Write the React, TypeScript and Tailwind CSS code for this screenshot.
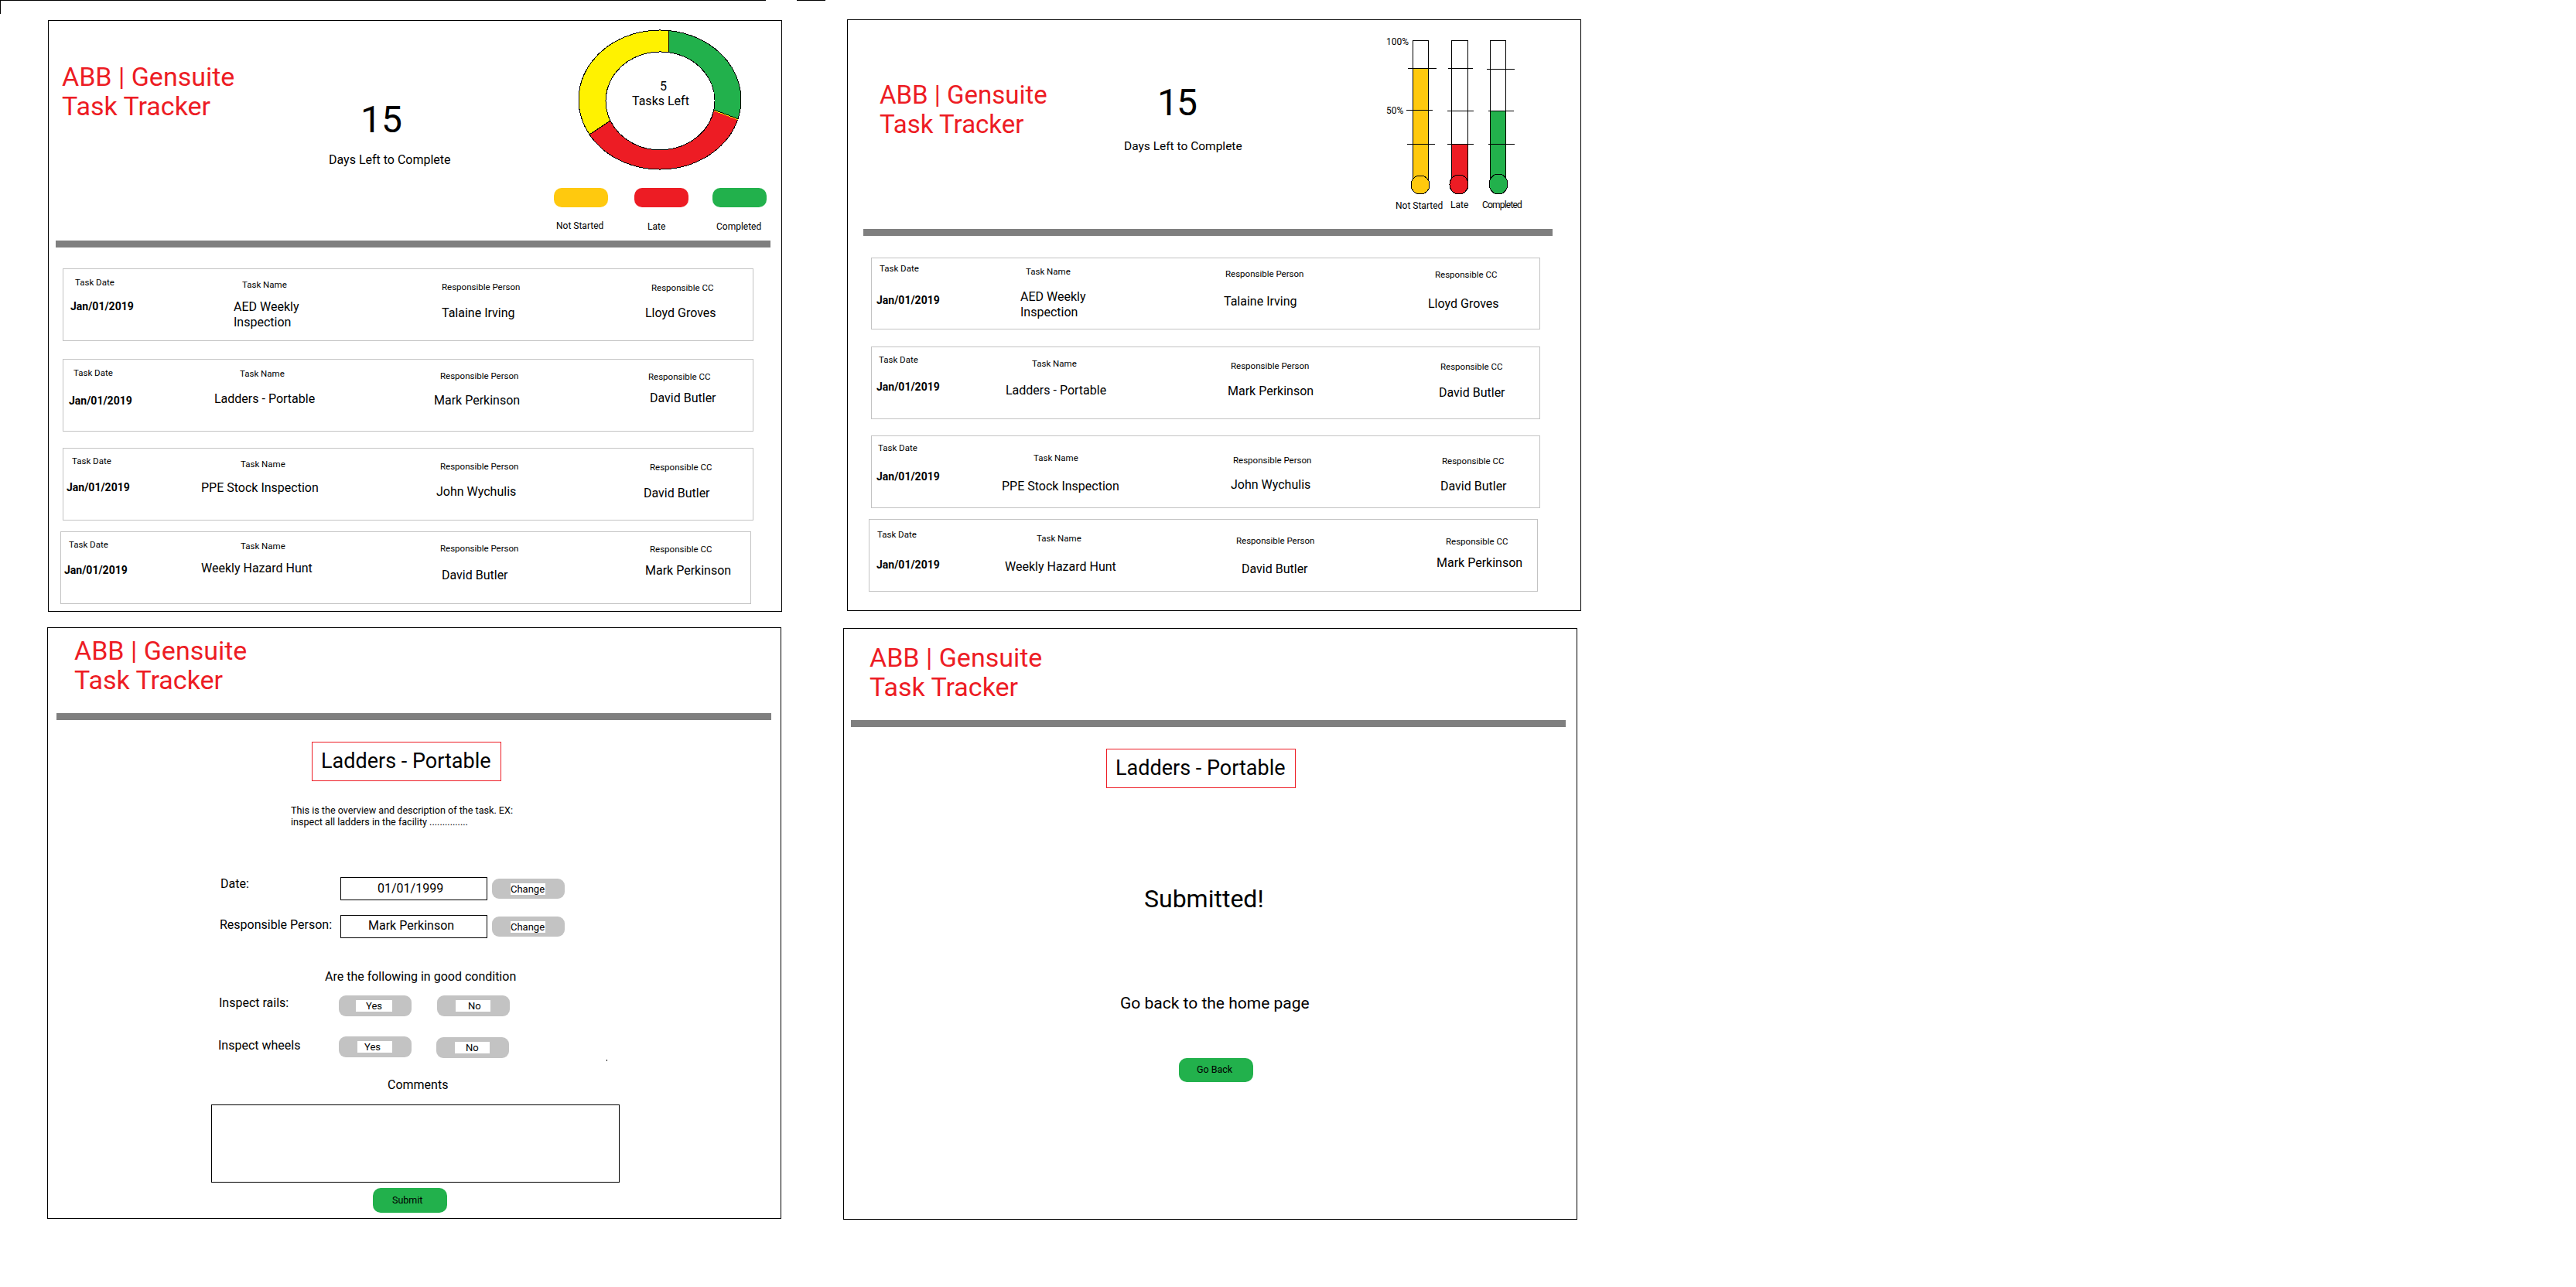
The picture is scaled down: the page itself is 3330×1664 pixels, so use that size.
import React from "react";

type Cell = { label: string; lc: string; value: React.ReactNode; vc: string };
type RowData = { cls: string; cells: Cell[] };

const L = ["Task Date", "Task Name", "Responsible Person", "Responsible CC"];

function c(i: number, lc: string, value: React.ReactNode, vc: string): Cell {
  return { label: L[i], lc, value, vc };
}

const aed = (
  <>
    AED Weekly
    <br />
    Inspection
  </>
);

const rows1: RowData[] = [
  {
    cls: "mt-[27px] ml-[18px] h-[94px]",
    cells: [
      c(0, "ml-[15px] mt-[9px]", "Jan/01/2019", "ml-[9px] mt-[13px]"),
      c(1, "ml-[71px] mt-[12px]", aed, "ml-[60px] mt-[11px]"),
      c(2, "ml-[49px] mt-[15px]", "Talaine Irving", "ml-[49px] mt-[16px]"),
      c(3, "ml-[60px] mt-[16px]", "Lloyd Groves", "ml-[52px] mt-[15px]"),
    ],
  },
  {
    cls: "mt-[23px] ml-[18px] h-[94px]",
    cells: [
      c(0, "ml-[13px] mt-[9px]", "Jan/01/2019", "ml-[7px] mt-[18px]"),
      c(1, "ml-[68px] mt-[10px]", "Ladders - Portable", "ml-[35px] mt-[15px]"),
      c(2, "ml-[47px] mt-[13px]", "Mark Perkinson", "ml-[39px] mt-[14px]"),
      c(3, "ml-[56px] mt-[14px]", "David Butler", "ml-[58px] mt-[10px]"),
    ],
  },
  {
    cls: "mt-[21px] ml-[18px] h-[94px]",
    cells: [
      c(0, "ml-[11px] mt-[8px]", "Jan/01/2019", "ml-[4px] mt-[16px]"),
      c(1, "ml-[69px] mt-[12px]", "PPE Stock Inspection", "ml-[18px] mt-[13px]"),
      c(2, "ml-[47px] mt-[15px]", "John Wychulis", "ml-[42px] mt-[15px]"),
      c(3, "ml-[58px] mt-[16px]", "David Butler", "ml-[50px] mt-[16px]"),
    ],
  },
  {
    cls: "mt-[14px] ml-[15px] h-[94px]",
    cells: [
      c(0, "ml-[10px] mt-[8px]", "Jan/01/2019", "ml-[4px] mt-[15px]"),
      c(1, "ml-[72px] mt-[10px]", "Weekly Hazard Hunt", "ml-[21px] mt-[11px]"),
      c(2, "ml-[50px] mt-[13px]", "David Butler", "ml-[52px] mt-[17px]"),
      c(3, "ml-[61px] mt-[14px]", "Mark Perkinson", "ml-[55px] mt-[10px]"),
    ],
  },
];

const rows2: RowData[] = [
  {
    cls: "mt-[28px] ml-[30px] h-[93px]",
    cells: [
      c(0, "ml-[10px] mt-[5px]", "Jan/01/2019", "ml-[6px] mt-[23px]"),
      c(1, "ml-[39px] mt-[9px]", aed, "ml-[32px] mt-[15px]"),
      c(2, "ml-[17px] mt-[12px]", "Talaine Irving", "ml-[15px] mt-[18px]"),
      c(3, "ml-[28px] mt-[13px]", "Lloyd Groves", "ml-[19px] mt-[20px]"),
    ],
  },
  {
    cls: "mt-[22px] ml-[30px] h-[94px]",
    cells: [
      c(0, "ml-[9px] mt-[8px]", "Jan/01/2019", "ml-[6px] mt-[17px]"),
      c(1, "ml-[47px] mt-[13px]", "Ladders - Portable", "ml-[13px] mt-[17px]"),
      c(2, "ml-[24px] mt-[16px]", "Mark Perkinson", "ml-[20px] mt-[15px]"),
      c(3, "ml-[35px] mt-[17px]", "David Butler", "ml-[33px] mt-[16px]"),
    ],
  },
  {
    cls: "mt-[21px] ml-[30px] h-[94px]",
    cells: [
      c(0, "ml-[8px] mt-[7px]", "Jan/01/2019", "ml-[6px] mt-[19px]"),
      c(1, "ml-[49px] mt-[20px]", "PPE Stock Inspection", "ml-[8px] mt-[19px]"),
      c(2, "ml-[27px] mt-[23px]", "John Wychulis", "ml-[24px] mt-[14px]"),
      c(3, "ml-[37px] mt-[24px]", "David Butler", "ml-[35px] mt-[15px]"),
    ],
  },
  {
    cls: "mt-[14px] ml-[27px] h-[94px]",
    cells: [
      c(0, "ml-[10px] mt-[11px]", "Jan/01/2019", "ml-[9px] mt-[21px]"),
      c(1, "ml-[56px] mt-[16px]", "Weekly Hazard Hunt", "ml-[15px] mt-[19px]"),
      c(2, "ml-[34px] mt-[19px]", "David Butler", "ml-[41px] mt-[19px]"),
      c(3, "ml-[45px] mt-[20px]", "Mark Perkinson", "ml-[33px] mt-[10px]"),
    ],
  },
];

const colW = ["w-[160px]", "w-[280px]", "w-[260px]", "flex-1"];

function TaskRow({ row, width }: { row: RowData; width: string }) {
  return (
    <div className={`flex shrink-0 border border-[#c3c3c3] ${width} ${row.cls}`}>
      {row.cells.map((cell, i) => (
        <div key={i} className={colW[i]}>
          <div className={`text-[11.5px] leading-[16px] whitespace-nowrap ${cell.lc}`}>{cell.label}</div>
          <div
            className={`whitespace-nowrap ${
              i === 0 ? "text-[14px] font-bold leading-[20px]" : "text-[16px] leading-[20px]"
            } ${cell.vc}`}
          >
            {cell.value}
          </div>
        </div>
      ))}
    </div>
  );
}

function Title({ cls }: { cls: string }) {
  return (
    <div className={`leading-[38px] text-[#ed1c24] whitespace-nowrap ${cls}`}>
      ABB | Gensuite
      <br />
      Task Tracker
    </div>
  );
}

function Donut() {
  return (
    <div className="relative ml-[54px] mt-[11px] h-[182px] w-[212px]">
      <svg width="212" height="182" viewBox="0 0 212 182" shapeRendering="crispEdges" className="block">
        <path
          d="M15,135.9 A105,90 0 0 1 117,1.5 L117,29.7 A70.5,63.5 0 0 0 42,118.1 Z"
          fill="#fff200"
          stroke="#000"
        />
        <path
          d="M207,115.6 A105,90 0 0 1 15,135.9 L42,118.1 A70.5,63.5 0 0 0 175.8,104 Z"
          fill="#ed1c24"
          stroke="#000"
        />
        <path
          d="M117,1.5 A105,90 0 0 1 207,115.6 L175.8,104 A70.5,63.5 0 0 0 117,29.7 Z"
          fill="#22b14c"
          stroke="#000"
        />
        <line x1="176" y1="105" x2="207" y2="116.6" stroke="#fff200" />
      </svg>
      <div className="absolute left-[70px] top-[64px] text-[16px] leading-[19px] whitespace-nowrap">
        <div className="ml-[36px]">5</div>
        <div>Tasks Left</div>
      </div>
    </div>
  );
}

function LegendItem({ color, label, cls, lc }: { color: string; label: string; cls: string; lc: string }) {
  return (
    <div className={`w-[70px] ${cls}`}>
      <div className={`h-[25px] rounded-[10px] ${color}`} />
      <div className={`text-[12px] leading-[16px] whitespace-nowrap ${lc}`}>{label}</div>
    </div>
  );
}

function Thermo() {
  return (
    <svg
      width="180"
      height="216"
      viewBox="0 0 180 216"
      shapeRendering="crispEdges"
      className="ml-[64px] mt-[14px] block"
    >
      <rect x="36.5" y="12.5" width="20" height="190" fill="#fff" stroke="#000" />
      <rect x="37" y="48" width="19" height="154" fill="#ffc90e" />
      <ellipse cx="46" cy="199" rx="12" ry="12" fill="#ffc90e" stroke="#000" />
      <line x1="30" x2="67" y1="48.5" y2="48.5" stroke="#000" />
      <line x1="28" x2="62" y1="102.5" y2="102.5" stroke="#000" />
      <line x1="29" x2="65" y1="146.5" y2="146.5" stroke="#000" />

      <rect x="86.5" y="12.5" width="21" height="190" fill="#fff" stroke="#000" />
      <rect x="87" y="146" width="20" height="56" fill="#ed1c24" />
      <ellipse cx="96" cy="198.5" rx="12" ry="12.5" fill="#ed1c24" stroke="#000" />
      <line x1="82" x2="114" y1="48.5" y2="48.5" stroke="#000" />
      <line x1="81" x2="115" y1="103.5" y2="103.5" stroke="#000" />
      <line x1="81" x2="115" y1="146.5" y2="146.5" stroke="#000" />

      <rect x="136.5" y="12.5" width="20" height="190" fill="#fff" stroke="#000" />
      <rect x="137" y="103" width="19" height="99" fill="#22b14c" />
      <ellipse cx="147" cy="198" rx="12" ry="13" fill="#22b14c" stroke="#000" />
      <line x1="132" x2="168" y1="49.5" y2="49.5" stroke="#000" />
      <line x1="134" x2="167" y1="103.5" y2="103.5" stroke="#000" />
      <line x1="134" x2="168" y1="146.5" y2="146.5" stroke="#000" />

      <text x="2" y="18" fontSize="12" fontFamily="Roboto, sans-serif" shapeRendering="auto">
        100%
      </text>
      <text x="2" y="107" fontSize="12" fontFamily="Roboto, sans-serif" shapeRendering="auto">
        50%
      </text>
    </svg>
  );
}

function GrayBtn({ text, cls, wc }: { text: string; cls: string; wc: string }) {
  return (
    <div className={`w-[94px] shrink-0 rounded-[9px] bg-[#c3c3c3] pt-[6px] ${cls}`}>
      <div className={`h-[15px] bg-white text-[13px] leading-[15px] whitespace-nowrap ${wc}`}>{text}</div>
    </div>
  );
}

function NameBox({ cls }: { cls: string }) {
  return (
    <div
      className={`h-[51px] w-[245px] border border-[#ed1c24] pl-[11px] pt-[7px] text-[27px] leading-[34px] whitespace-nowrap ${cls}`}
    >
      Ladders - Portable
    </div>
  );
}

function GreenBtn({ text, cls }: { text: string; cls: string }) {
  return (
    <div className={`flex w-[96px] items-center rounded-[10px] bg-[#22b14c] text-[12.5px] ${cls}`}>{text}</div>
  );
}

export default function App() {
  return (
    <div className="h-[1664px] w-[3330px] overflow-hidden bg-white font-[Roboto,sans-serif] text-[#000]">
      <div className="flex h-[18px] items-start">
        <div className="h-[18px] w-[990px] border-l border-t border-black" />
        <div className="ml-[40px] w-[37px] border-t border-black" />
      </div>

      <div className="flex items-start">
        <section className="ml-[62px] mt-[8px] flex h-[765px] w-[949px] flex-col border border-black">
          <header className="flex h-[284px]">
            <div className="w-[300px]">
              <Title cls="ml-[17px] mt-[53px] text-[34px]" />
            </div>
            <div className="w-[330px]">
              <div className="ml-[103px] mt-[104px] text-[48px] leading-[48px]">15</div>
              <div className="ml-[62px] mt-[17px] text-[16px] leading-[22px] whitespace-nowrap">
                Days Left to Complete
              </div>
            </div>
            <div className="flex-1">
              <Donut />
              <div className="mt-[23px] flex">
                <LegendItem color="bg-[#ffc90e]" label="Not Started" cls="ml-[23px]" lc="ml-[3px] mt-[16px]" />
                <LegendItem color="bg-[#ed1c24]" label="Late" cls="ml-[34px]" lc="ml-[17px] mt-[17px]" />
                <LegendItem color="bg-[#22b14c]" label="Completed" cls="ml-[31px]" lc="ml-[5px] mt-[17px]" />
              </div>
            </div>
          </header>
          <div className="ml-[9px] h-[9px] w-[924px] bg-[#7f7f7f]" />
          {rows1.map((r, i) => (
            <TaskRow key={i} row={r} width="w-[893px]" />
          ))}
        </section>

        <section className="ml-[84px] mt-[7px] flex h-[765px] w-[949px] flex-col border border-black">
          <header className="flex h-[270px]">
            <div className="w-[300px]">
              <Title cls="ml-[41px] mt-[78px] text-[33px]" />
            </div>
            <div className="w-[330px]">
              <div className="ml-[100px] mt-[83px] text-[48px] leading-[48px] tracking-[-2px]">15</div>
              <div className="ml-[57px] mt-[21px] text-[15.5px] leading-[22px] whitespace-nowrap">
                Days Left to Complete
              </div>
            </div>
            <div className="flex-1">
              <Thermo />
              <div className="mt-[2px] flex text-[12px] leading-[16px] whitespace-nowrap">
                <div className="ml-[78px] w-[60px]">Not Started</div>
                <div className="ml-[11px] w-[30px] -mt-px">Late</div>
                <div className="ml-[11px] -mt-px tracking-[-0.8px]">Completed</div>
              </div>
            </div>
          </header>
          <div className="ml-[20px] h-[9px] w-[891px] bg-[#7f7f7f]" />
          {rows2.map((r, i) => (
            <TaskRow key={i} row={r} width="w-[865px]" />
          ))}
        </section>
      </div>

      <div className="flex items-start">
        <section className="relative ml-[61px] mt-[20px] flex h-[765px] w-[949px] flex-col items-start border border-black">
          <Title cls="ml-[34px] mt-[10px] text-[34px]" />
          <div className="ml-[11px] mt-[24px] h-[9px] w-[924px] bg-[#7f7f7f]" />
          <NameBox cls="ml-[341px] mt-[28px]" />
          <p className="ml-[314px] mt-[30px] text-[12.6px] leading-[15px] whitespace-nowrap">
            This is the overview and description of the task. EX:
            <br />
            inspect all ladders in the facility ...............
          </p>
          <div className="mt-[63px] flex h-[31px] items-start">
            <div className="ml-[223px] w-[155px] text-[16px] leading-[20px]">Date:</div>
            <div className="mt-[1px] h-[30px] w-[190px] border border-black pl-[47px] pt-[4px] text-[16px] leading-[20px]">
              01/01/1999
            </div>
            <GrayBtn text="Change" cls="ml-[6px] mt-[3px] h-[26px]" wc="ml-[24px] w-[45px]" />
          </div>
          <div className="mt-[19px] flex h-[30px] items-start">
            <div className="ml-[222px] mt-[3px] w-[156px] text-[16px] leading-[20px] whitespace-nowrap">
              Responsible Person:
            </div>
            <div className="h-[30px] w-[190px] border border-black pl-[35px] pt-[3px] text-[16px] leading-[20px]">
              Mark Perkinson
            </div>
            <GrayBtn text="Change" cls="ml-[6px] mt-[2px] h-[26px]" wc="ml-[24px] w-[45px]" />
          </div>
          <div className="ml-[358px] mt-[40px] text-[16px] leading-[20px] whitespace-nowrap">
            Are the following in good condition
          </div>
          <div className="mt-[14px] flex items-start">
            <div className="ml-[221px] w-[155px] text-[16px] leading-[20px]">Inspect rails:</div>
            <GrayBtn text="Yes" cls="h-[27px]" wc="ml-[22px] w-[47px] pl-[13px]" />
            <GrayBtn text="No" cls="ml-[33px] h-[27px]" wc="ml-[24px] w-[45px] pl-[16px]" />
          </div>
          <div className="mt-[26px] flex h-[28px] items-start">
            <div className="ml-[220px] mt-[2px] w-[156px] text-[16px] leading-[20px]">Inspect wheels</div>
            <GrayBtn text="Yes" cls="h-[27px]" wc="ml-[24px] w-[45px] pl-[9px]" />
            <GrayBtn text="No" cls="ml-[32px] mt-[1px] h-[27px]" wc="ml-[24px] w-[45px] pl-[14px]" />
          </div>
          <div className="ml-[439px] mt-[25px] text-[16px] leading-[20px]">Comments</div>
          <div className="ml-[211px] mt-[15px] h-[101px] w-[528px] border border-black" />
          <GreenBtn text="Submit" cls="ml-[420px] mt-[7px] h-[32px] pl-[25px]" />
          <div className="absolute left-[722px] top-[558px] h-[2px] w-[1px] bg-black" />
        </section>

        <section className="ml-[80px] mt-[21px] flex h-[765px] w-[949px] flex-col items-start border border-black">
          <Title cls="ml-[33px] mt-[18px] text-[34px]" />
          <div className="ml-[9px] mt-[24px] h-[9px] w-[924px] bg-[#7f7f7f]" />
          <NameBox cls="ml-[339px] mt-[28px]" />
          <div className="ml-[388px] mt-[124px] text-[32px] leading-[38px]">Submitted!</div>
          <div className="ml-[357px] mt-[103px] text-[21px] leading-[26px] whitespace-nowrap">
            Go back to the home page
          </div>
          <GreenBtn text="Go Back" cls="ml-[433px] mt-[58px] h-[31px] pl-[23px]" />
        </section>
      </div>
    </div>
  );
}
